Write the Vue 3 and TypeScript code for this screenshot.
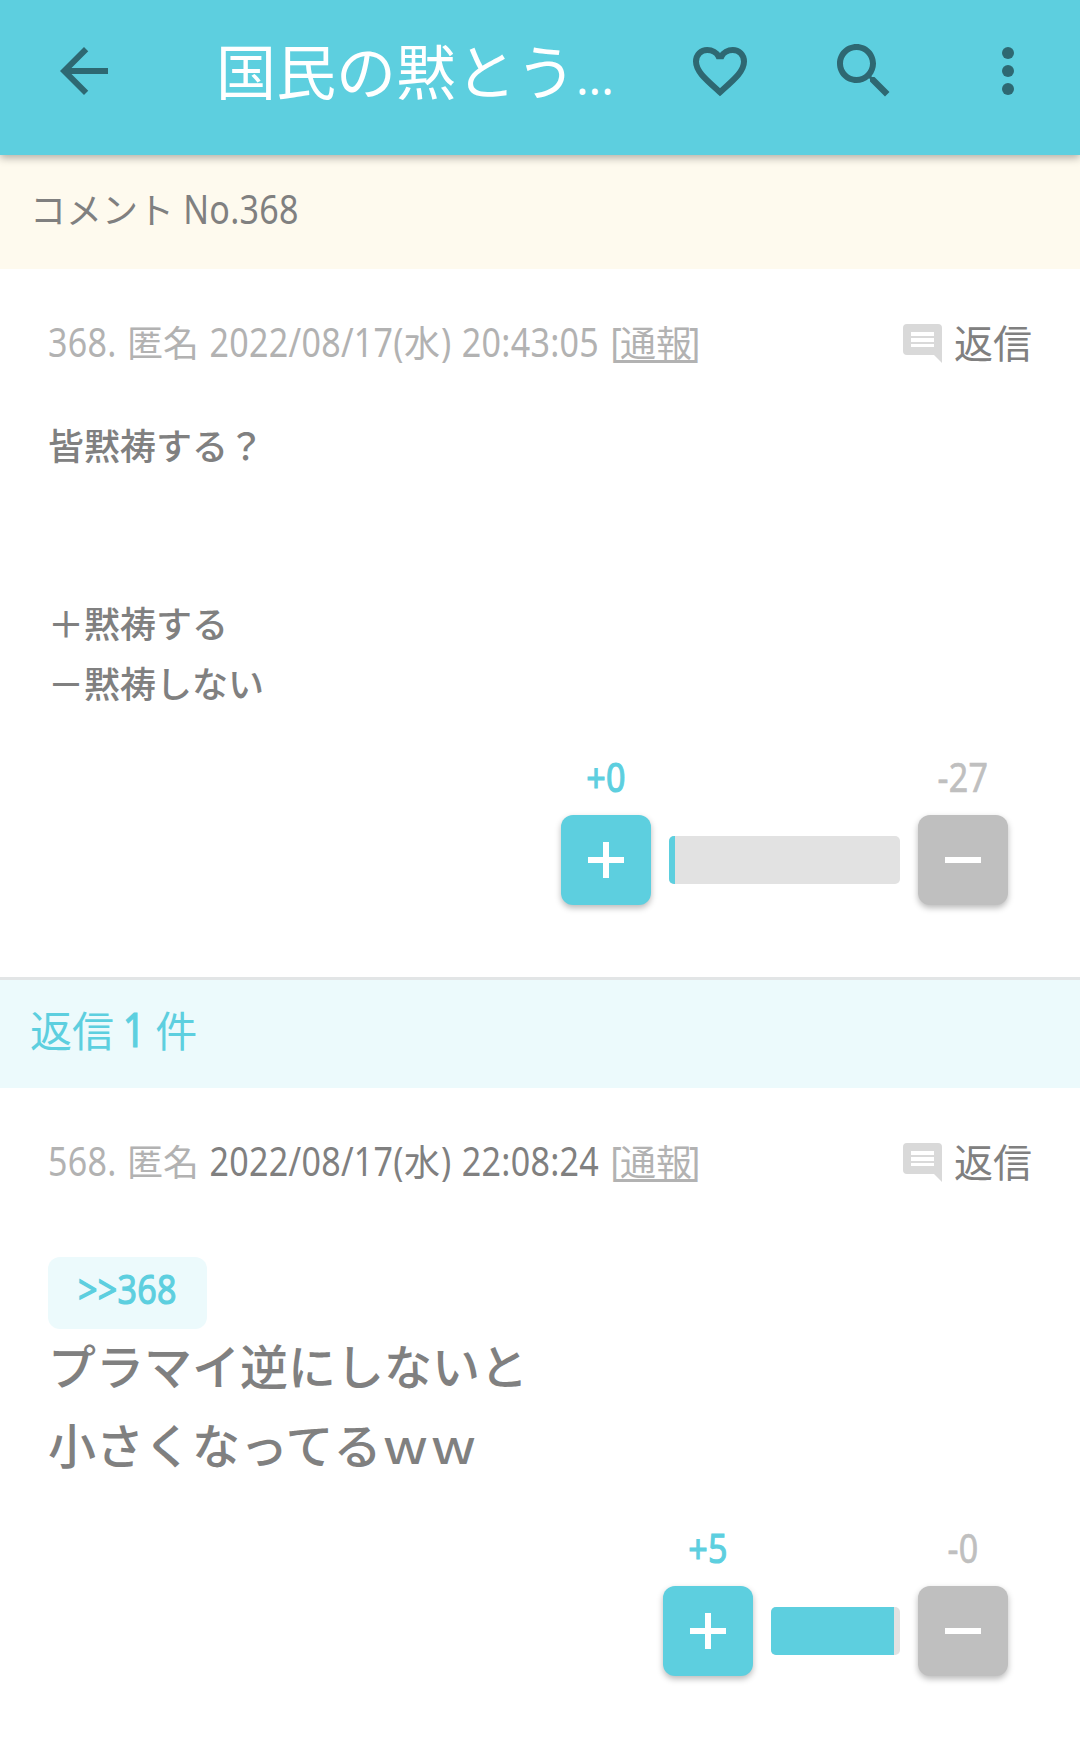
<script setup lang="ts">
interface Comment {
  id: number
  name: string
  date: string
  read: boolean
  quote?: number
  lines: string[]
  plus: number
  minus: number
  trackWidth: number
  fillWidth: number
}

const comments: Comment[] = [
  {
    id: 368,
    name: '匿名',
    date: '2022/08/17(水) 20:43:05',
    read: true,
    lines: ['皆黙祷する？', '', '', '＋黙祷する', '－黙祷しない'],
    plus: 0,
    minus: 27,
    trackWidth: 231,
    fillWidth: 6,
  },
  {
    id: 568,
    name: '匿名',
    date: '2022/08/17(水) 22:08:24',
    read: false,
    quote: 368,
    lines: ['プラマイ逆にしないと', '小さくなってるｗｗ'],
    plus: 5,
    minus: 0,
    trackWidth: 129,
    fillWidth: 123,
  },
]

// Splits a string so that half-width runs can be drawn taller than the kanji.
const runs = (text: string): string[] => text.split(/([\u3000-\u9fff]+)/).filter(Boolean)
const isLatin = (run: string): boolean => /^[\x20-\x7e]+$/.test(run)
</script>

<template>
  <div class="screen">
    <header class="bar">
      <svg class="icon" viewBox="0 0 24 24"><path d="M20 11H7.83l5.59-5.59L12 4l-8 8 8 8 1.41-1.41L7.83 13H20v-2z" /></svg>
      <h1 class="title">国民の黙とう<span class="dots">...</span></h1>
      <nav class="actions">
        <svg class="icon" viewBox="0 0 72 72"><path class="heart" d="M36 57.2C22 44.6 12 36.500 12 26.600C12 19.600 17.200 15 23.200 15C28.300 15 32.700 17.800 34.400 21.200H37.600C39.300 17.800 43.700 15 48.800 15C54.800 15 60 19.600 60 26.600C60 36.500 50 44.600 36 57.200Z" /></svg>
        <svg class="icon" viewBox="0 0 24 24"><path d="M15.5 14h-.79l-.28-.27C15.41 12.590 16 11.110 16 9.500 16 5.910 13.090 3 9.500 3S3 5.910 3 9.500 5.910 16 9.500 16c1.610 0 3.090-.59 4.230-1.570l.27.28v.79l5 4.990L20.490 19l-4.990-5zm-6 0C7.010 14 5 11.990 5 9.500S7.010 5 9.500 5 14 7.010 14 9.500 11.990 14 9.500 14z" /></svg>
        <svg class="icon" viewBox="0 0 24 24"><circle cx="12" cy="6" r="2" /><circle cx="12" cy="12" r="2" /><circle cx="12" cy="18" r="2" /></svg>
      </nav>
    </header>

    <div class="heading">コメント<span class="lat">&nbsp;No.368</span></div>

    <template v-for="(c, i) in comments" :key="c.id">
      <div v-if="i === 1" class="replies">返信<span class="lat one">&nbsp;1&nbsp;</span>件</div>
      <article class="comment" :class="{ reply: i > 0 }">
        <div class="meta">
          <p class="info">
            <span class="lat">{{ c.id }}.&nbsp;</span>{{ c.name }}<span class="lat">&nbsp;</span><span class="date" :class="{ unread: !c.read }"><span v-for="(r, k) in runs(c.date)" :key="k" :class="{ lat: isLatin(r) }">{{ r }}</span></span><span class="lat open">&nbsp;[</span><a class="report">通報</a><span class="lat close">]</span>
          </p>
          <div class="answer">
            <svg class="bubble" viewBox="0 0 39 39"><path d="M4 0H35Q39 0 39 4V39L31 31H4Q0 31 0 27V4Q0 0 4 0Z" fill="#d9d9d9" /><path d="M8 8h23v4H8zM8 14h23v4H8zM8 20h23v3H8z" fill="#fff" /></svg>
            <span>返信</span>
          </div>
        </div>
        <div v-if="c.quote" class="quote"><span class="lat">&gt;&gt;{{ c.quote }}</span></div>
        <div class="body">
          <p v-for="(l, k) in c.lines" :key="k">{{ l }}</p>
        </div>
        <div class="votes">
          <div class="vote">
            <span class="count plus lat">+{{ c.plus }}</span>
            <button class="btn up"><svg viewBox="0 0 36 36"><path d="M15 0h6v15h15v6H21v15h-6V21H0v-6h15z" /></svg></button>
          </div>
          <div class="track" :style="{ width: c.trackWidth + 'px' }">
            <div class="fill" :style="{ width: c.fillWidth + 'px' }"></div>
          </div>
          <div class="vote">
            <span class="count minus lat">-{{ c.minus }}</span>
            <button class="btn down"><svg viewBox="0 0 36 36"><path d="M0 15h36v6H0z" /></svg></button>
          </div>
        </div>
      </article>
    </template>
  </div>
</template>

<style>
body {
  background: #fff;
}
</style>

<style scoped>
.screen {
  width: 1080px;
  height: 1746px;
  overflow: hidden;
  background: #fff;
  color: #808080;
  font-family: 'Noto Sans CJK JP', sans-serif;
  font-size: 36px;
}
p,
h1 {
  margin: 0;
}
.lat {
  display: inline-block;
  font-family: 'Noto Sans', 'Noto Sans CJK JP', sans-serif;
  font-size: 0.945em;
  letter-spacing: 0.3px;
  white-space: pre;
  transform: scaleY(1.2);
  transform-origin: 0 74.5%;
}
.bar {
  position: relative;
  z-index: 1;
  box-sizing: border-box;
  display: flex;
  align-items: center;
  height: 155px;
  padding: 0 36px 13px 48px;
  background: #5dcfdf;
  box-shadow: 0 3px 8px rgba(0, 0, 0, 0.3);
}
.icon {
  display: block;
  flex: none;
  width: 72px;
  height: 72px;
  fill: #2e6872;
}
.heart {
  fill: none;
  stroke: #2e6872;
  stroke-width: 6;
}
.title {
  flex: 1;
  height: 84px;
  margin-left: 96px;
  color: #fff;
  font-size: 60px;
  font-weight: 400;
  line-height: 84px;
  margin-top: -4px;
  white-space: nowrap;
}
.dots {
  font-family: 'Noto Sans', sans-serif;
  font-size: 47px;
  line-height: 1;
}
.actions {
  display: flex;
  gap: 72px;
}
.heading {
  height: 114px;
  box-sizing: border-box;
  padding: 26px 30px 0;
  background: #fefaee;
  line-height: 54px;
}
.comment {
  box-sizing: border-box;
  height: 708px;
  padding: 45px 48px 0;
}
.meta {
  display: flex;
  justify-content: space-between;
  align-items: flex-start;
  height: 54px;
}
.info {
  height: 54px;
  color: #b2b2b2;
  line-height: 54px;
  white-space: nowrap;
  word-spacing: 1.2px;
}
.date .lat:last-child {
  margin-left: 1px;
}
.open {
  margin: 0 -2px 0 1px;
}
.close {
  margin-left: -3px;
}
.unread {
  color: #808080;
}
.report {
  text-decoration: underline;
  text-decoration-thickness: 3px;
  text-underline-offset: 3px;
}
.answer {
  display: flex;
  align-items: center;
  gap: 12px;
  font-size: 39px;
  line-height: 54px;
}
.bubble {
  width: 39px;
  height: 39px;
  margin-top: 5px;
}
.body {
  margin-top: 47px;
  font-weight: 500;
  line-height: 59.4px;
}
.body p {
  height: 59.4px;
}
.reply .body {
  margin-top: -4px;
  font-size: 48px;
  line-height: 79px;
}
.reply .body p {
  height: 79px;
}
.quote {
  width: 159px;
  height: 72px;
  margin-top: 70px;
  border-radius: 12px;
  background: #ecfafc;
  color: #5dcfdf;
  line-height: 65px;
  text-align: center;
}
.quote .lat,
.count.plus,
.one {
  -webkit-text-stroke: 1px currentColor;
}
.votes {
  display: flex;
  justify-content: flex-end;
  align-items: flex-end;
  gap: 18px;
  margin-top: 40px;
  padding-right: 24px;
}
.vote {
  display: flex;
  flex-direction: column;
  align-items: center;
  width: 90px;
}
.count {
  height: 54px;
  margin-bottom: 9px;
  line-height: 54px;
}
.plus {
  color: #5dcfdf;
}
.minus {
  color: #bfbfbf;
  -webkit-text-stroke: 0.6px currentColor;
}
.btn {
  display: grid;
  place-items: center;
  width: 90px;
  height: 90px;
  padding: 0;
  border: 0;
  border-radius: 12px;
  box-shadow: 0 3px 6px rgba(0, 0, 0, 0.27);
}
.btn svg {
  width: 36px;
  height: 36px;
  fill: #fff;
}
.up {
  background: #5dcfdf;
}
.down {
  background: #bfbfbf;
}
.track {
  height: 48px;
  margin-bottom: 21px;
  border-radius: 5px;
  background: #e2e2e2;
  overflow: hidden;
}
.fill {
  height: 48px;
  background: #5dcfdf;
}
.replies {
  box-sizing: border-box;
  height: 111px;
  border-top: 3px solid #e2e5e6;
  padding: 18px 30px 0;
  background: #ecfafc;
  color: #5dcfdf;
  font-size: 42px;
  line-height: 62px;
}
.one {
  margin: 0 -1px 0 -2px;
}
</style>
